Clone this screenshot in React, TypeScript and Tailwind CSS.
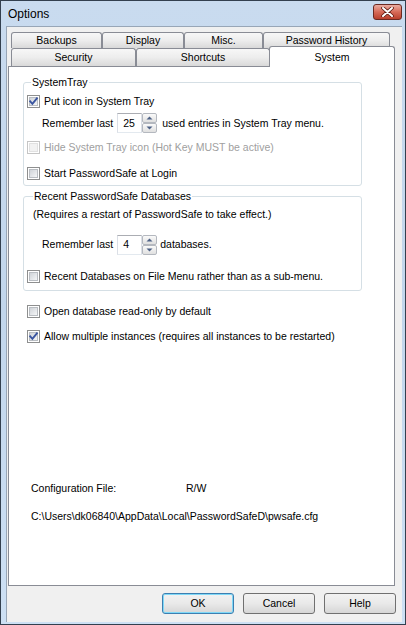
const tabBase =
  'flex items-center justify-center border border-b-0 border-[#898c95] rounded-t-[3px] bg-gradient-to-b from-[#f7f7f7] via-[#ededed] to-[#d9d9d9] text-black'

const btnBase =
  'w-[72px] h-[21px] rounded-[3px] border bg-gradient-to-b from-[#f2f2f2] via-[#e9e9e9] to-[#d6d6d6] text-black'

function Check({ checked = false, disabled = false }: { checked?: boolean; disabled?: boolean }) {
  return (
    <svg width="13" height="13" viewBox="0 0 13 13" className="shrink-0">
      <defs>
        <linearGradient id="cbin" x1="0" y1="0" x2="1" y2="1">
          <stop offset="0" stopColor="#cdd1d6" />
          <stop offset="1" stopColor="#f7f8f9" />
        </linearGradient>
      </defs>
      <rect x="0.5" y="0.5" width="12" height="12" fill="#fff" stroke={disabled ? '#c5c5c5' : '#8e8f8f'} />
      <rect x="2.5" y="2.5" width="8" height="8" fill={disabled ? '#f2f2f2' : 'url(#cbin)'} stroke={disabled ? '#e1e1e1' : '#b9bdc2'} />
      {checked && (
        <path d="M3.2 6.3 L5.4 8.8 L9.9 3.3" fill="none" stroke="#3a55a0" strokeWidth="1.9" strokeLinecap="square" />
      )}
    </svg>
  )
}

function CheckRow({ label, checked, disabled, className }: { label: string; checked?: boolean; disabled?: boolean; className: string }) {
  return (
    <div className={`flex items-center h-[18px] gap-[4px] ${className}`}>
      <Check checked={checked} disabled={disabled} />
      <span className={disabled ? 'text-[#a0a0a0]' : 'text-black'}>{label}</span>
    </div>
  )
}

function Spin({ value }: { value: string }) {
  return (
    <div className="flex h-[20px] ml-[4px]">
      <div className="w-[25px] h-full bg-white border border-[#abadb3] border-l-[#dbdfe6] border-r-[#dbdfe6] border-b-[#e3e9ef] flex items-center pl-[5px]">
        {value}
      </div>
      <div className="w-[15px] h-full flex flex-col">
        {[0, 1].map((i) => (
          <div
            key={i}
            className="h-[10px] border border-[#b4b8bf] rounded-[2px] bg-gradient-to-b from-[#fafafa] to-[#e0e0e0] flex items-center justify-center"
          >
            <svg width="7" height="4" viewBox="0 0 7 4">
              <path d={i === 0 ? 'M0.5 3.5 L3.5 0.5 L6.5 3.5Z' : 'M0.5 0.5 L3.5 3.5 L6.5 0.5Z'} fill="#4d6185" />
            </svg>
          </div>
        ))}
      </div>
    </div>
  )
}

export default function App() {
  return (
    <div className="w-[406px] h-[625px] flex flex-col border border-[#33404f] bg-gradient-to-b from-[#c9dbef] via-[#c2d6ec] to-[#cde0f4] font-['Liberation_Sans',Arial,sans-serif] text-[10.5px] leading-none select-none">
      {/* title bar */}
      <div className="h-[25px] flex items-center pl-[7px] pr-[3px] shrink-0">
        <span className="text-[12px] text-black">Options</span>
        <div className="ml-auto -mt-[3px] w-[29px] h-[16px] rounded-[3px] border border-[#6b2a22] bg-gradient-to-b from-[#e9aca2] via-[#d66a58] to-[#b9402d] flex items-center justify-center">
          <svg width="13" height="10" viewBox="0 0 13 10">
            <path d="M2 1 L11 9 M11 1 L2 9" stroke="#5c1a12" strokeWidth="3.6" strokeLinecap="round" />
            <path d="M2 1 L11 9 M11 1 L2 9" stroke="#fff" strokeWidth="2" strokeLinecap="round" />
          </svg>
        </div>
      </div>

      {/* client area */}
      <div className="flex-1 ml-[5px] mr-[3px] mb-[2px] bg-[#f0f0f0] border-l border-t border-[#98a6b7] flex flex-col">
        {/* tab control */}
        <div className="ml-[1px] mt-[4px] w-[387px] flex flex-col">
          <div className="h-[17px] flex pl-[3px] pt-[1px]">
            <div className={`${tabBase} w-[91px]`}>Backups</div>
            <div className={`${tabBase} w-[82px]`}>Display</div>
            <div className={`${tabBase} w-[79px]`}>Misc.</div>
            <div className={`${tabBase} w-[127px]`}>Password History</div>
          </div>
          <div className="h-[18px] flex items-start pl-[3px]">
            <div className={`${tabBase} w-[125px] h-[18px]`}>Security</div>
            <div className={`${tabBase} w-[134px] h-[18px]`}>Shortcuts</div>
            <div className="relative z-10 -ml-[1px] -mt-[2px] w-[126px] h-[21px] bg-white border border-b-0 border-[#898c95] rounded-t-[3px] flex justify-center pt-[5px]">
              System
            </div>
          </div>

          {/* page */}
          <div className="h-[520px] bg-white border border-[#898c95] flex flex-col">
            {/* SystemTray group */}
            <div className="mt-[15px] ml-[14px] w-[339px] border border-[#d5dfe5] rounded-[3px] flex flex-col pb-[3px]">
              <span className="-mt-[8px] ml-[7px] px-[1px] w-fit bg-white leading-[14px]">SystemTray</span>
              <CheckRow className="mt-[3px] pl-[3px]" checked label="Put icon in System Tray" />
              <div className="mt-[3px] h-[20px] flex items-center pl-[18px]">
                <span>Remember last</span>
                <Spin value="25" />
                <span className="ml-[5px]">used entries in System Tray menu.</span>
              </div>
              <CheckRow className="mt-[5px] pl-[3px]" disabled label="Hide System Tray icon (Hot Key MUST be active)" />
              <CheckRow className="mt-[8px] pl-[3px]" label="Start PasswordSafe at Login" />
            </div>

            {/* Recent databases group */}
            <div className="mt-[10px] ml-[14px] w-[339px] border border-[#d5dfe5] rounded-[3px] flex flex-col pb-[5px]">
              <span className="-mt-[8px] ml-[9px] px-[1px] w-fit bg-white leading-[14px]">Recent PasswordSafe Databases</span>
              <div className="mt-[2px] h-[18px] flex items-center pl-[9px]">(Requires a restart of PasswordSafe to take effect.)</div>
              <div className="mt-[11px] h-[21px] flex items-center pl-[18px]">
                <span>Remember last</span>
                <Spin value="4" />
                <span className="ml-[3px]">databases.</span>
              </div>
              <CheckRow className="mt-[12px] pl-[3px]" label="Recent Databases on File Menu rather than as a sub-menu." />
            </div>

            <CheckRow className="mt-[11px] ml-[18px]" label="Open database read-only by default" />
            <CheckRow className="mt-[7px] ml-[18px]" checked label="Allow multiple instances (requires all instances to be restarted)" />

            <div className="mt-[134px] h-[18px] flex items-center pl-[22px]">
              <span className="w-[155px]">Configuration File:</span>
              <span>R/W</span>
            </div>
            <div className="mt-[10px] h-[18px] flex items-center pl-[22px]">
              C:\Users\dk06840\AppData\Local\PasswordSafeD\pwsafe.cfg
            </div>
          </div>
        </div>

        {/* buttons */}
        <div className="mt-[7px] flex justify-end gap-[9px] pr-[6px]">
          <button className={`${btnBase} border-[#3c7fb1] shadow-[inset_0_0_0_1px_#7fd8f7]`}>OK</button>
          <button className={`${btnBase} border-[#707070]`}>Cancel</button>
          <button className={`${btnBase} border-[#707070]`}>Help</button>
        </div>
      </div>
    </div>
  )
}
